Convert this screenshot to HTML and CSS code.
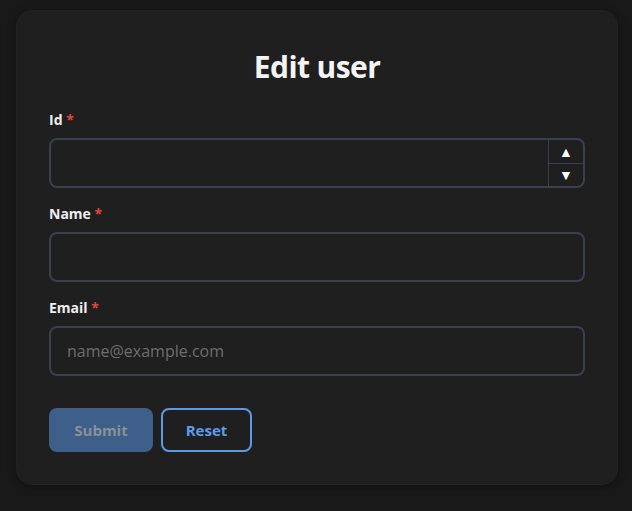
FILE: index.html
```html
<!DOCTYPE html>
<html lang="en">
<head>
<meta charset="utf-8">
<title>Edit user</title>
<link rel="stylesheet" href="styles.css">
</head>
<body>
<form class="card">
  <h1 class="title">Edit user</h1>
  <div class="field">
    <label class="label">Id <span class="req">*</span></label>
    <div class="box">
      <input class="input" type="text">
      <div class="spin">
        <span class="spin-btn">&#9650;</span>
        <span class="spin-btn">&#9660;</span>
      </div>
    </div>
  </div>
  <div class="field">
    <label class="label">Name <span class="req">*</span></label>
    <div class="box">
      <input class="input" type="text">
    </div>
  </div>
  <div class="field">
    <label class="label">Email <span class="req">*</span></label>
    <div class="box">
      <input class="input" type="text" placeholder="name@example.com">
    </div>
  </div>
  <div class="actions">
    <button type="button" class="btn btn-submit">Submit</button>
    <button type="button" class="btn btn-reset">Reset</button>
  </div>
</form>
</body>
</html>
```
FILE: styles.css
```css
html, body {
  margin: 0;
  background: #191919;
}
body {
  padding: 10px 14px 26px 16px;
  font-family: "Open Sans", "Noto Sans", sans-serif;
  color: #f2f2f2;
}
.card {
  background: #1f1f1f;
  border: 1px solid #222222;
  border-radius: 16px;
  padding: 36px 32px 32px;
  box-shadow: 0 2px 8px rgba(0,0,0,0.35);
  display: flex;
  flex-direction: column;
}
.title {
  margin: 0 0 23px;
  font-size: 30px;
  line-height: 40px;
  font-weight: 700;
  text-align: center;
  color: #f4f4f4;
  letter-spacing: -0.6px;
}
.field {
  display: flex;
  flex-direction: column;
  gap: 8px;
  margin-bottom: 16px;
}
.label {
  font-size: 14px;
  line-height: 20px;
  font-weight: 700;
  color: #f0f0f0;
}
.req {
  color: #e0453e;
}
.box {
  display: flex;
  height: 50px;
  box-sizing: border-box;
  border: 2px solid #3b3f4e;
  border-radius: 8px;
  overflow: hidden;
}
.input {
  flex: 1;
  min-width: 0;
  border: 0;
  background: transparent;
  padding: 0 16px;
  font-family: inherit;
  font-size: 16px;
  color: #e8e8e8;
  outline: none;
}
.input::placeholder {
  color: #6e6e6e;
}
.spin {
  width: 34px;
  display: flex;
  flex-direction: column;
  border-left: 1px solid #3b3f4e;
}
.spin-btn {
  flex: 1;
  display: flex;
  align-items: center;
  justify-content: center;
  font-size: 14px;
  color: #ffffff;
}
.spin-btn + .spin-btn {
  border-top: 1px solid #3b3f4e;
}
.actions {
  display: flex;
  gap: 8px;
  margin-top: 16px;
}
.btn {
  height: 44px;
  border-radius: 8px;
  font-family: inherit;
  font-size: 15px;
  font-weight: 700;
  box-sizing: border-box;
}
.btn-submit {
  width: 104px;
  background: #3e5f89;
  border: 0;
  color: #8b9099;
}
.btn-reset {
  width: 91px;
  background: transparent;
  border: 2px solid #5b9be6;
  color: #5d9df0;
}
```
